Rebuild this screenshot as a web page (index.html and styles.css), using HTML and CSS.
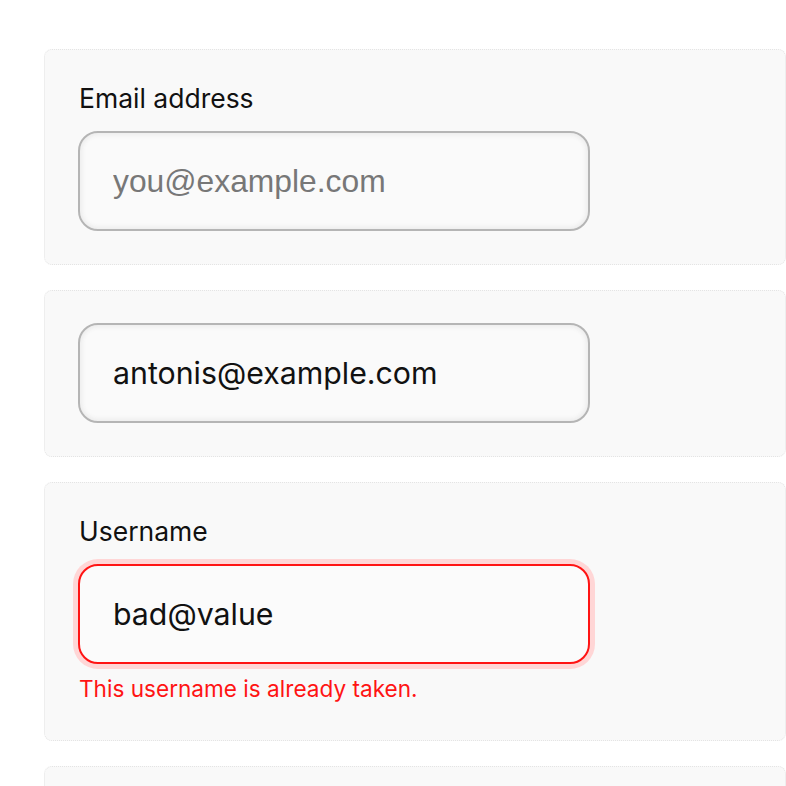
FILE: index.html
```html
<!DOCTYPE html>
<html lang="en">
<head>
<meta charset="utf-8">
<title>Form fields</title>
<link rel="stylesheet" href="styles.css">
</head>
<body>
<main class="stack">
  <section class="card">
    <label class="label" for="email">Email address</label>
    <input class="field" id="email" type="email" placeholder="you@example.com">
  </section>
  <section class="card">
    <input class="field" type="email" value="antonis@example.com" aria-label="Email">
  </section>
  <section class="card">
    <label class="label" for="user">Username</label>
    <input class="field field-error" id="user" type="text" value="bad@value">
    <p class="error">This username is already taken.</p>
  </section>
  <section class="card card-tail"></section>
</main>
</body>
</html>
```
FILE: styles.css
```css
* { box-sizing: border-box; }
html, body { margin: 0; padding: 0; background: #ffffff; }
body {
  font-family: Inter, "Noto Sans", sans-serif;
  color: #111111;
  overflow: hidden;
  height: 786px;
}
.stack {
  display: flex;
  flex-direction: column;
  gap: 25px;
  padding: 49px 0 0 44px;
}
.card {
  width: 742px;
  background: #f9f9f9;
  border: 1px dotted #e4e4e4;
  border-radius: 8px;
  padding: 32px 34px 33px 33px;
  display: flex;
  flex-direction: column;
  align-items: flex-start;
}
.card-tail { height: 120px; }
.label {
  display: block;
  font-size: 26.5px;
  line-height: 33px;
  margin: 0 0 16px 1px;
  color: #111;
}
.field {
  width: 512px;
  height: 100px;
  border: 2px solid #b5b5b5;
  border-radius: 20px;
  background: #fafafa;
  box-shadow: inset 0 0 4px 2px #ececec;
  padding: 0 0 0 33px;
  font-family: Inter, "Noto Sans", sans-serif;
  font-size: 30.3px;
  color: #111;
  outline: none;
  margin: 0;
}
.field::placeholder {
  font-family: "Liberation Sans", Arial, sans-serif;
  font-size: 31.8px;
  color: #777777;
  opacity: 1;
}
.field-error {
  border-color: #ff1414;
  background: #fbfbfb;
  box-shadow: 0 0 0 5px #ffd6d6;
}
.error {
  margin: 7px 0 0 1px;
  font-size: 22.6px;
  line-height: 36px;
  color: #ff1414;
}
```
